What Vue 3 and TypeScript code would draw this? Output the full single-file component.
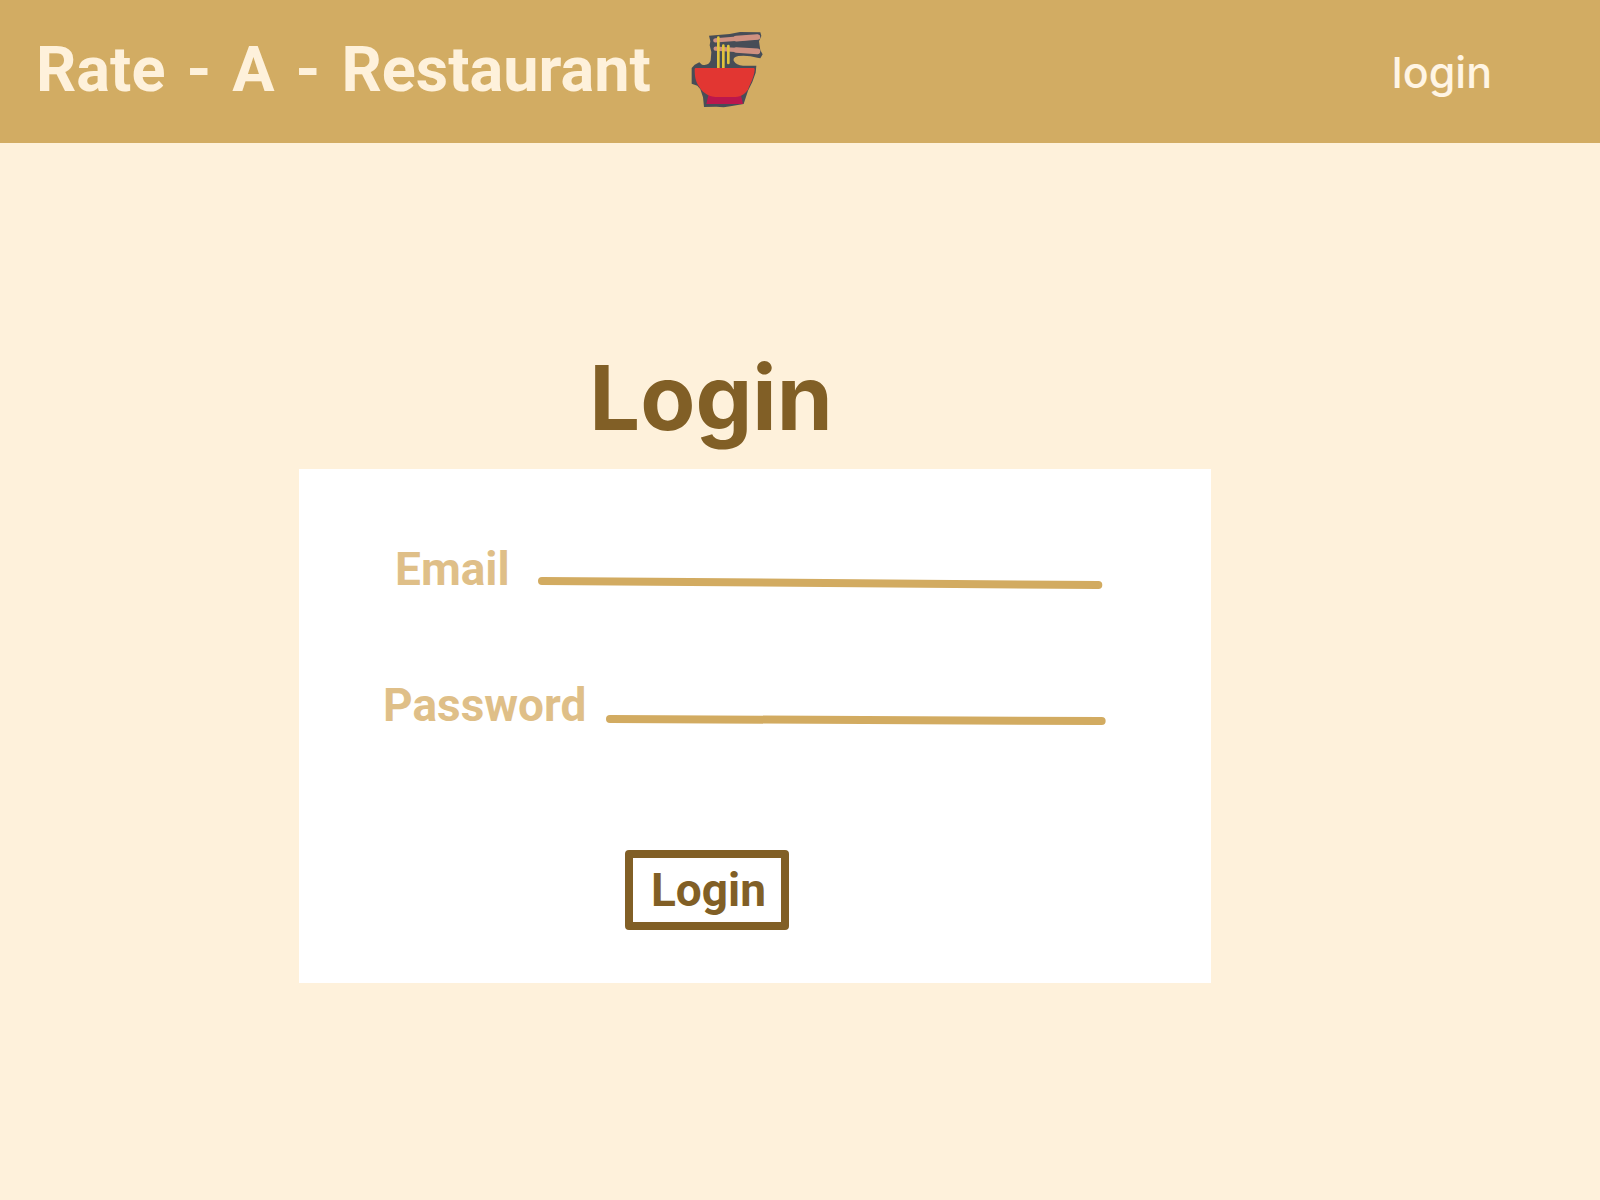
<script setup lang="ts">
import { reactive } from 'vue'

const form = reactive({ email: '', password: '' })

function submit(): void {
  form.password = ''
}
</script>

<template>
  <div class="page">
    <header class="bar">
      <h1 class="brand"><span>Rate</span> <span>-</span> <span>A</span> <span>-</span> <span>Restaurant</span></h1>
      <svg class="bowl" viewBox="34 33 216 231" aria-hidden="true">
        <path
          d="M88 47L150 42L181 36L242 37L245 48L238 64L242 91L249 103L242 115L233 113Q205 105 176 108Q159 112 162 122Q170 136 190 137H230L228 158L218 186L205 212L192 252L152 259L132 262L110 260L73 261L70 232L62 208L53 197L36 191V144L45 134L59 127L67 134Q88 138 93 121L95 96L90 76L92 64Z"
          fill="#474d57"
        />
        <g stroke="#cf9181" stroke-linecap="round">
          <path d="M107 61L235 51" stroke-width="13" />
          <path d="M108 86L235 94" stroke-width="13" />
          <path d="M170 56L233 51M170 90L233 94" stroke-width="17" />
        </g>
        <path d="M116 53V146M131 77V146M146 78V129" stroke="#e2c33c" stroke-width="8" stroke-linecap="round" />
        <path d="M86 226H184L190 252H80Z" fill="#bb174d" />
        <path d="M48 144H223Q226 145 225 151C222 176 211 192 205 209C193 225 180 231 160 231H107C81 229 66 214 55 195C46 178 45 166 45 147Q46 144 48 144Z" fill="#e23632" />
      </svg>
      <nav class="nav"><a href="#login">login</a></nav>
    </header>

    <main class="content">
      <h2 class="heading">Login</h2>
      <form id="login" class="card" @submit.prevent="submit">
        <div class="row email">
          <label for="email">Email</label>
          <div class="field">
            <input id="email" v-model="form.email" type="email" autocomplete="email" />
            <svg class="rule" aria-hidden="true"><line x1="0" y1="4" x2="100%" y2="8" /></svg>
          </div>
        </div>
        <div class="row password">
          <label for="password">Password</label>
          <div class="field">
            <input id="password" v-model="form.password" type="password" autocomplete="current-password" />
            <svg class="rule" aria-hidden="true"><line x1="0" y1="6" x2="100%" y2="8" /></svg>
          </div>
        </div>
        <button type="submit" class="submit">Login</button>
      </form>
    </main>
  </div>
</template>

<style>
body {
  margin: 0;
  background: #fef1db;
}
</style>

<style scoped>
.page {
  min-height: 100vh;
  box-sizing: border-box;
  background: #fef1db;
  font-family: Roboto, 'Liberation Sans', sans-serif;
}
.bar {
  display: flex;
  align-items: center;
  gap: 40px;
  height: 143px;
  padding: 0 108px 0 36px;
  background: #d2ac63;
  color: #fef1db;
}
.brand {
  display: flex;
  gap: 21px;
  margin: 0 0 4px;
  font-size: 63px;
  line-height: 72px;
  font-weight: 700;
  white-space: nowrap;
}
.bowl {
  width: 72px;
  height: 77px;
  margin-bottom: 4px;
  flex: none;
  fill: none;
}
.nav {
  margin-left: auto;
}
.nav a {
  color: #fff5e4;
  font-family: Inter, 'Liberation Sans', sans-serif;
  font-size: 43px;
  line-height: 52px;
  font-weight: 500;
  text-decoration: none;
}
.content {
  width: 57%;
  margin-left: 299px;
  padding-top: 200px;
}
.heading {
  margin: 0 88px 16px 0;
  color: #815f26;
  font-family: Inter, 'Liberation Sans', sans-serif;
  font-size: 90px;
  line-height: 110px;
  font-weight: 700;
  text-align: center;
}
.card {
  display: flex;
  flex-direction: column;
  box-sizing: border-box;
  padding: 72px 109px 53px 84px;
  background: #ffffff;
}
.row {
  display: flex;
  gap: 32px;
  height: 56px;
  margin-bottom: 80px;
  color: #dfbf88;
  font-size: 46px;
  line-height: 56px;
  font-weight: 700;
}
.email {
  padding: 0 4px 0 12px;
}
.password {
  gap: 24px;
  margin-bottom: 117px;
}
.field {
  position: relative;
  display: flex;
  flex: 1;
  min-width: 0;
}
.field input {
  width: 100%;
  min-width: 0;
  padding: 0;
  border: 0;
  outline: 0;
  background: transparent;
  color: #815f26;
  font: inherit;
  font-size: 32px;
}
.rule {
  position: absolute;
  left: 0;
  bottom: 4px;
  width: 100%;
  height: 16px;
  overflow: visible;
  pointer-events: none;
}
.rule line {
  stroke: #d2ab61;
  stroke-width: 8px;
  stroke-linecap: round;
}
.submit {
  align-self: center;
  box-sizing: border-box;
  width: 164px;
  height: 80px;
  margin-right: 72px;
  padding: 0 0 0 4px;
  border: 8px solid #815f26;
  border-radius: 4px;
  background: #ffffff;
  color: #815f26;
  font: inherit;
  font-size: 46px;
  line-height: 56px;
  font-weight: 700;
  cursor: pointer;
}
</style>
